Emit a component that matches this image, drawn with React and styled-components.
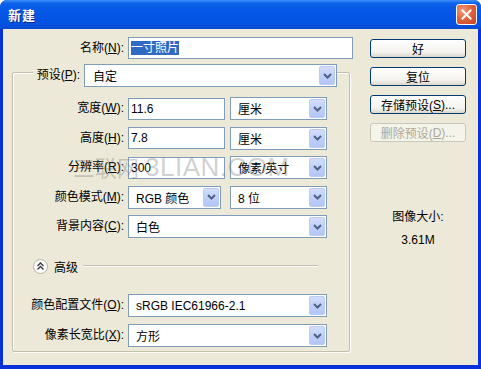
import React from 'react';
import styled, { createGlobalStyle } from 'styled-components';

const GlobalStyle = createGlobalStyle`
  html, body { margin: 0; padding: 0; background: #ffffff; }
  body {
    font-family: "Liberation Sans", "Noto Sans CJK SC", sans-serif;
    font-size: 12px;
    color: #000000;
  }
`;

const Window = styled.div`
  position: relative;
  width: 481px;
  height: 369px;
  display: flex;
  flex-direction: column;
  background: #0831d9;
  border-radius: 7px 7px 0 0;
  overflow: hidden;
`;

const TitleBar = styled.div`
  flex: none;
  height: 29px;
  box-sizing: border-box;
  display: flex;
  align-items: center;
  justify-content: space-between;
  padding: 0 4px 0 8px;
  background: linear-gradient(#3d8ff8 0, #0c61ea 12%, #0456e6 45%, #0453e2 80%, #0a49d0 100%);
`;

const Title = styled.span`
  color: #ffffff;
  font-weight: bold;
  font-size: 13px;
  letter-spacing: 1px;
  text-shadow: 1px 1px 0 #0a2a8a;
`;

const CloseButton = styled.div`
  width: 21px;
  height: 21px;
  box-sizing: border-box;
  border: 1px solid #ffffff;
  border-radius: 3px;
  display: flex;
  align-items: center;
  justify-content: center;
  background: radial-gradient(circle at 30% 30%, #f09a7c 0, #e2663f 45%, #c6431f 100%);
`;

const Body = styled.div`
  flex: 1;
  margin: 0 3px 4px;
  background: #ece9d8;
  display: flex;
  align-items: flex-start;
  padding: 8px 0 0 9px;
`;

const Main = styled.div`
  width: 341px;
  display: flex;
  flex-direction: column;
`;

const Row = styled.div`
  display: flex;
  align-items: center;
  height: ${p => p.h || 23}px;
`;

const Label = styled.div`
  width: ${p => p.w}px;
  box-sizing: border-box;
  padding-right: 4px;
  text-align: right;
  white-space: nowrap;
  line-height: 15px;
`;

const TextInput = styled.div`
  width: ${p => p.w}px;
  height: 22px;
  box-sizing: border-box;
  border: 1px solid #7f9db9;
  background: #ffffff;
  display: flex;
  align-items: center;
  padding-left: 2px;
  white-space: nowrap;
`;

const Selected = styled.span`
  background: #316ac5;
  color: #ffffff;
  line-height: 14px;
`;

const SelectBox = styled.div`
  width: ${p => p.w}px;
  height: ${p => p.h || 23}px;
  margin-left: ${p => p.ml || 0}px;
  box-sizing: border-box;
  border: 1px solid #7f9db9;
  background: #ffffff;
  display: flex;
  align-items: center;
  padding: 1px;
`;

const SelectText = styled.span`
  flex: 1;
  padding-left: ${p => p.pl || 6}px;
  white-space: nowrap;
  overflow: hidden;
`;

const ArrowButton = styled.div`
  width: 16px;
  align-self: stretch;
  box-sizing: border-box;
  border: 1px solid #bccbf2;
  border-radius: 2px;
  background: linear-gradient(#d2defd, #bccdf9 60%, #b2c6f7);
  display: flex;
  align-items: center;
  justify-content: center;
`;

const GroupBox = styled.div`
  margin-top: 13px;
  width: 338px;
  box-sizing: border-box;
  border: 1px solid #c2bfae;
  box-shadow: inset 1px 1px 0 #ffffff, 1px 1px 0 #ffffff;
  border-radius: 2px;
  padding-bottom: 4px;
  display: flex;
  flex-direction: column;
`;

const Legend = styled.div`
  margin: -9px 0 0 20px;
  width: 304px;
  height: 23px;
  background: #ece9d8;
  display: flex;
  align-items: center;
`;

const Rows = styled.div`
  display: flex;
  flex-direction: column;
  gap: ${p => p.gap}px;
  margin-top: ${p => p.mt}px;
`;

const Advanced = styled.div`
  margin-top: 20px;
  height: 16px;
  display: flex;
  align-items: center;
  padding-left: 20px;
  padding-right: 31px;
`;

const AdvancedText = styled.span`
  margin-left: 6px;
`;

const Rule = styled.div`
  flex: 1;
  margin-left: 5px;
  height: 0;
  border-top: 1px solid #c2bfae;
  border-bottom: 1px solid #ffffff;
`;

const Side = styled.div`
  margin-left: 17px;
  margin-top: 2px;
  width: 96px;
  display: flex;
  flex-direction: column;
  align-items: stretch;
`;

const Buttons = styled.div`
  display: flex;
  flex-direction: column;
  gap: 9px;
`;

const Button = styled.div`
  height: 19px;
  box-sizing: border-box;
  border: 1px solid ${p => (p.disabled ? '#c9c7ba' : '#003c74')};
  border-radius: 3px;
  background: ${p => (p.disabled
    ? '#f5f4ea'
    : 'linear-gradient(#ffffff, #f4f3ee 70%, #dcd8cc)')};
  color: ${p => (p.disabled ? '#aca899' : '#000000')};
  display: flex;
  align-items: center;
  justify-content: center;
  white-space: nowrap;
`;

const Info = styled.div`
  margin-top: 68px;
  display: flex;
  flex-direction: column;
  align-items: center;
  gap: 8px;
  line-height: 15px;
`;

const Watermark = styled.div`
  position: absolute;
  left: 73px;
  top: 150px;
  display: flex;
  align-items: baseline;
  gap: 6px;
  color: rgba(110, 110, 110, 0.32);
  pointer-events: none;
  white-space: nowrap;
`;

const WaterCn = styled.span`
  font-size: 22px;
`;

const WaterEn = styled.span`
  font-size: 26px;
  letter-spacing: 0.5px;
`;

const Chevron = () => (
  <svg width="9" height="6" viewBox="0 0 9 6">
    <polyline points="1,1 4.5,4.5 8,1" fill="none" stroke="#4d6185" strokeWidth="2" />
  </svg>
);

const Select = ({ w, h, ml, pl, children }) => (
  <SelectBox w={w} h={h} ml={ml}>
    <SelectText pl={pl}>{children}</SelectText>
    <ArrowButton><Chevron /></ArrowButton>
  </SelectBox>
);

const CloseIcon = () => (
  <svg width="11" height="11" viewBox="0 0 11 11">
    <path d="M1.5 1.5 L9.5 9.5 M9.5 1.5 L1.5 9.5" stroke="#ffffff" strokeWidth="2" strokeLinecap="square" />
  </svg>
);

const CollapseIcon = () => (
  <svg width="15" height="15" viewBox="0 0 15 15">
    <circle cx="7.5" cy="7.5" r="7" fill="#ffffff" stroke="#b7b4a3" />
    <path d="M4.5 7 L7.5 4 L10.5 7 M4.5 10.5 L7.5 7.5 L10.5 10.5" fill="none" stroke="#3a3a3a" strokeWidth="1.4" />
  </svg>
);

export default function App() {
  return (
    <>
      <GlobalStyle />
      <Window>
        <TitleBar>
          <Title>新建</Title>
          <CloseButton><CloseIcon /></CloseButton>
        </TitleBar>
        <Body>
          <Main>
            <Row h={22}>
              <Label w={116}>名称(<u>N</u>):</Label>
              <TextInput w={225}><Selected>一寸照片</Selected></TextInput>
            </Row>
            <GroupBox>
              <Legend>
                <Label w={51}>预设(<u>P</u>):</Label>
                <Select w={253} pl={7}>自定</Select>
              </Legend>
              <Rows gap={6.5} mt={10}>
                <Row>
                  <Label w={115}>宽度(<u>W</u>):</Label>
                  <TextInput w={97}>11.6</TextInput>
                  <Select w={97} ml={5}>厘米</Select>
                </Row>
                <Row>
                  <Label w={115}>高度(<u>H</u>):</Label>
                  <TextInput w={97}>7.8</TextInput>
                  <Select w={97} ml={5}>厘米</Select>
                </Row>
                <Row>
                  <Label w={115}>分辨率(<u>R</u>):</Label>
                  <TextInput w={97}>300</TextInput>
                  <Select w={97} ml={5}>像素/英寸</Select>
                </Row>
                <Row>
                  <Label w={115}>颜色模式(<u>M</u>):</Label>
                  <Select w={93}>RGB 颜色</Select>
                  <Select w={97} ml={9}>8 位</Select>
                </Row>
                <Row>
                  <Label w={115}>背景内容(<u>C</u>):</Label>
                  <Select w={199}>白色</Select>
                </Row>
              </Rows>
              <Advanced>
                <CollapseIcon />
                <AdvancedText>高级</AdvancedText>
                <Rule />
              </Advanced>
              <Rows gap={7} mt={20}>
                <Row>
                  <Label w={115}>颜色配置文件(<u>O</u>):</Label>
                  <Select w={199}>sRGB IEC61966-2.1</Select>
                </Row>
                <Row>
                  <Label w={115}>像素长宽比(<u>X</u>):</Label>
                  <Select w={199}>方形</Select>
                </Row>
              </Rows>
            </GroupBox>
          </Main>
          <Side>
            <Buttons>
              <Button>好</Button>
              <Button>复位</Button>
              <Button>存储预设(<u>S</u>)...</Button>
              <Button disabled>删除预设(<u>D</u>)...</Button>
            </Buttons>
            <Info>
              <span>图像大小:</span>
              <span>3.61M</span>
            </Info>
          </Side>
        </Body>
        <Watermark>
          <WaterCn>三联网</WaterCn>
          <WaterEn>3LIAN.COM</WaterEn>
        </Watermark>
      </Window>
    </>
  );
}
